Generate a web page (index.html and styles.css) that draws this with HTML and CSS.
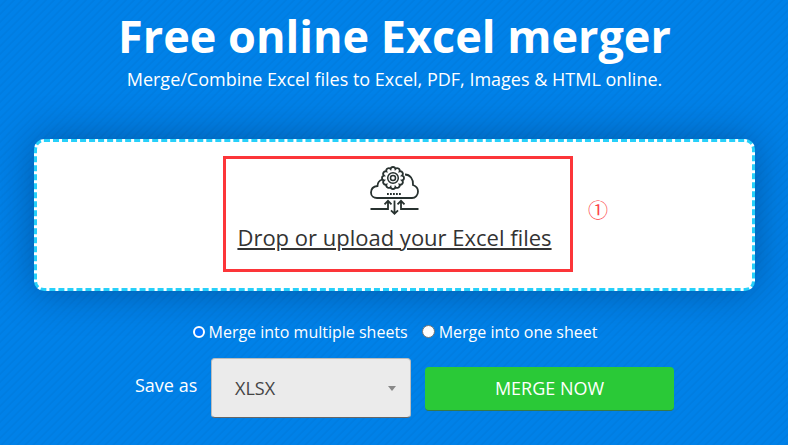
FILE: index.html
```html
<!DOCTYPE html>
<html lang="en">
<head>
<meta charset="utf-8">
<title>Free online Excel merger</title>
<link rel="stylesheet" href="styles.css">
</head>
<body>
<main class="page">
  <header class="hero">
    <h1 class="title">Free online Excel merger</h1>
    <p class="subtitle">Merge/Combine Excel files to Excel, PDF, Images &amp; HTML online.</p>
  </header>
  <section class="dropzone">
    <div class="highlight">
      <svg class="cloud" width="50" height="50" viewBox="0 0 50 50" fill="none" stroke="#27312f" stroke-width="1.8">
        <path d="M12.500 13.500C9 14.500 7.500 17.500 7.500 20C3 20.500 1 23.500 1 26.500C1 30 3.800 32 7 32H42C45.500 32 48 29 48 25.500C48 22 46 20 43 19C43.500 13 40 8.500 35 8.500"/>
        <g transform="translate(23 12)">
          <path stroke-width="1.800" d="M8.980 2.410A2.450 2.450 0 0 1 6.580 6.580A2.450 2.450 0 0 1 2.410 8.980A2.450 2.450 0 0 1 -2.410 8.980A2.450 2.450 0 0 1 -6.580 6.580A2.450 2.450 0 0 1 -8.980 2.410A2.450 2.450 0 0 1 -8.980 -2.410A2.450 2.450 0 0 1 -6.580 -6.580A2.450 2.450 0 0 1 -2.410 -8.980A2.450 2.450 0 0 1 2.410 -8.980A2.450 2.450 0 0 1 6.580 -6.580A2.450 2.450 0 0 1 8.980 -2.410A2.450 2.450 0 0 1 8.980 2.410Z"/>
          <circle r="5.300" stroke-width="1.500"/>
          <circle r="2.500" stroke-width="1.500"/>
        </g>
        <path d="M17 28H31" stroke-dasharray="1.800 1.200"/>
        <path d="M.5 43H18V35M14.500 38.300L18 34.800L21.500 38.300M24.500 34.500V47.500M21 44.300L24.500 47.800L28 44.300M48.500 43H31V35M27.500 38.300L31 34.800L34.500 38.300"/>
      </svg>
      <a class="upload">Drop or upload your Excel files</a>
    </div>
    <span class="step">①</span>
  </section>
  <div class="modes">
    <label class="mode"><span class="radio checked"></span><span class="multi">Merge into multiple sheets</span></label>
    <label class="mode"><span class="radio"></span><span class="single">Merge into one sheet</span></label>
  </div>
  <div class="actions">
    <span class="save">Save as</span>
    <div class="select"><span>XLSX</span><i class="caret"></i></div>
    <button class="merge">MERGE NOW</button>
  </div>
</main>
</body>
</html>
```
FILE: styles.css
```css
* { box-sizing: border-box; }
body { margin: 0; font-family: "Open Sans", sans-serif; color: #fff; }
.page {
  width: 788px; height: 445px; overflow: hidden;
  display: flex; flex-direction: column; align-items: center;
  background: repeating-linear-gradient(135deg, #0081e8 0, #0081e8 3px, #007de1 4px, #007de1 4.8px, #0081e8 5.657px);
}
.hero { height: 139px; padding-top: 5px; margin-left: 1px; text-align: center; white-space: nowrap; }
.title { margin: 0; font-size: 45px; line-height: 62px; font-weight: 700; }
.subtitle { margin: 0; font-size: 18px; line-height: 24px; }
.dropzone {
  position: relative; flex: none; width: 721px; height: 152px; margin: 0 0 1px 1px;
  padding: 14px 0 0 186px;
  border: 3px dashed #26d0fa; border-radius: 10px; background: #fff;
  box-shadow: 0 0 40px rgba(0, 20, 50, .36);
}
.highlight {
  width: 350px; height: 116px; border: 3px solid #fc3539;
  display: flex; flex-direction: column; align-items: center; padding-top: 7px;
}
.cloud { flex: none; margin-right: 7px; }
.upload {
  margin-right: 7px; margin-top: 5px; color: #333; font-size: 22px; line-height: 32px; white-space: nowrap;
  text-decoration: underline; text-decoration-thickness: 2px; text-underline-offset: 2px;
}
.step {
  position: absolute; left: 551px; top: 55px;
  color: #fc4549; font: 20px/26px "Noto Sans CJK SC", sans-serif;
}
.modes { height: 66px; padding-top: 28px; margin-left: 2px; display: flex; gap: 14px; font-size: 16px; line-height: 24px; white-space: nowrap; }
.mode { display: flex; align-items: center; gap: 4px; height: 24px; }
.radio { width: 13px; height: 13px; margin-bottom: 1px; border-radius: 50%; background: #fff; border: 1px solid #767676; }
.checked { width: 12px; height: 12px; border: 2px solid #fff; background: #0075ff; }
.actions { width: 540px; margin-left: 22px; display: flex; }
.save { width: 76px; padding-top: 15px; font-size: 18px; line-height: 25px; }
.select {
  width: 200px; height: 60px; padding: 0 14px 0 23px; margin-right: 14px;
  display: flex; align-items: center; justify-content: space-between;
  background: #ebebeb; border: 1px solid #bbb; border-bottom: 1px solid #666; border-radius: 4px;
  color: #444; font-size: 18px;
}
.caret { border: 4px solid transparent; border-top: 5px solid #888; border-bottom: 0; }
.merge {
  width: 249px; height: 44px; margin-top: 9px; padding: 0 0 2px;
  background: #2ac937; border: 0; border-bottom: 1px solid #36784b; border-radius: 4px;
  color: #fff; font: 18px "Open Sans", sans-serif;
}
```
